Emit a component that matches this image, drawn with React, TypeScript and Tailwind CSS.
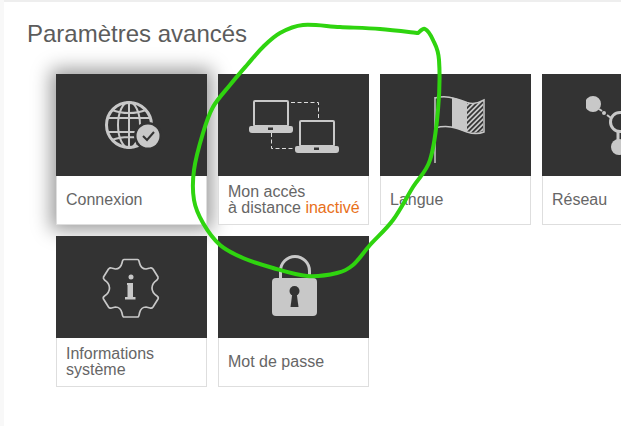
// scribble around the "Mon accès" card, traced from the screenshot
const scribble: [number, number][] = [
  [418, 33], [380, 29], [340, 27], [303, 25], [280, 33], [263, 47], [247, 65], [230, 85], [213, 107], [203, 133],
  [194, 170], [194, 200], [203, 223], [220, 245], [243, 258], [273, 268], [307, 276], [337, 273], [353, 265],
  [370, 245], [393, 220], [413, 187], [430, 160], [438, 110], [439, 60], [433, 40], [425, 29], [418, 33],
];

function smoothPath(pts: [number, number][]) {
  let d = `M${pts[0][0]} ${pts[0][1]}`;
  for (let i = 0; i < pts.length - 1; i++) {
    const p0 = pts[Math.max(i - 1, 0)];
    const p1 = pts[i];
    const p2 = pts[i + 1];
    const p3 = pts[Math.min(i + 2, pts.length - 1)];
    d += `C${p1[0] + (p2[0] - p0[0]) / 6} ${p1[1] + (p2[1] - p0[1]) / 6} ${p2[0] - (p3[0] - p1[0]) / 6} ${p2[1] - (p3[1] - p1[1]) / 6} ${p2[0]} ${p2[1]}`;
  }
  return d;
}

function GlobeIcon() {
  return (
    <svg width="62" height="62" viewBox="0 0 62 62" fill="none" stroke="#c8c8c8" strokeWidth="2">
      <circle cx="29" cy="31" r="22.5" strokeWidth="3" />
      <ellipse cx="29" cy="31" rx="11" ry="23" />
      <path d="M29 8v46M7 24h44M7 38h44M12 16c10 4 24 4 34 0M12 46c10-4 24-4 34 0" />
      <circle cx="48" cy="42" r="14" fill="#333333" stroke="none" />
      <circle cx="48" cy="42" r="11.5" fill="#c8c8c8" stroke="none" />
      <path d="M43 42l4 4 7-8" stroke="#333333" strokeWidth="2" />
    </svg>
  );
}

function Laptop({ x, y }: { x: number; y: number }) {
  return (
    <g transform={`translate(${x} ${y})`}>
      <rect x="5" y="1" width="34" height="25" rx="1" fill="none" stroke="#c8c8c8" strokeWidth="2" />
      <path d="M2 26h40a2 2 0 0 1 2 2v2a3 3 0 0 1-3 3H3a3 3 0 0 1-3-3v-2a2 2 0 0 1 2-2z" fill="#c8c8c8" />
      <rect x="19" y="27.5" width="5" height="2.5" fill="#333333" />
    </g>
  );
}

function LaptopsIcon() {
  return (
    <svg width="92" height="56" viewBox="0 0 92 56">
      <path d="M44 5.500H71.500V21M24.500 36V51.500H47" fill="none" stroke="#dddddd" strokeWidth="1" strokeDasharray="4 2.500" />
      <Laptop x={2} y={3} />
      <Laptop x={48} y={23} />
    </svg>
  );
}

function FlagIcon() {
  return (
    <svg width="60" height="76" viewBox="0 0 60 76" fill="none">
      <defs>
        <pattern id="hatch" width="3.500" height="3.500" patternUnits="userSpaceOnUse" patternTransform="rotate(45)">
          <rect width="3.500" height="3.500" fill="#333333" />
          <rect width="1.700" height="3.500" fill="#c8c8c8" />
        </pattern>
      </defs>
      <path d="M10 10v66" stroke="#c8c8c8" strokeWidth="1.500" />
      <path d="M27 10.500C32 11 37 14 42 15.500V45C37 44 32 41 27 40z" fill="#c8c8c8" />
      <path d="M42 15.500C48 17 53 16 58 13.500V44C53 46 48 46 42 45z" fill="url(#hatch)" />
      <path d="M10 11C20 8.500 27 10 42 15.500C48 17.500 54 16 59 13V45C54 47 48 47 42 45C30 40 22 38 10 41" stroke="#c8c8c8" strokeWidth="1.500" />
    </svg>
  );
}

function NetworkIcon() {
  return (
    <svg width="62" height="62" viewBox="0 0 62 62" fill="none">
      <circle cx="7" cy="10" r="8" fill="#c8c8c8" />
      <path d="M13 15l3 2" stroke="#c8c8c8" strokeWidth="2" />
      <circle cx="18" cy="19" r="2" fill="#c8c8c8" />
      <path d="M21 21l4 3" stroke="#c8c8c8" strokeWidth="2" />
      <circle cx="34" cy="28" r="9.500" stroke="#c8c8c8" strokeWidth="3" />
      <path d="M32 38v8" stroke="#c8c8c8" strokeWidth="3" />
      <circle cx="33" cy="53" r="8" fill="#c8c8c8" />
    </svg>
  );
}

function InfoGearIcon() {
  return (
    <svg width="60" height="62" viewBox="0 0 60 62" fill="none">
      <path
        d="M23 3.500H36.500C38 3.500 38 5 38.500 7C39.500 11 42 13 45 13L49 12C50.500 11.500 51 12 52 13L57 21C57.500 22.500 57 23 56 24C53 26 51 29 51 32C51 35 53 38 56 40C57.500 41 57.500 42 57 43L52 51C51 52.500 50.500 52.500 49 52L45 51C42 51 39.500 53 38.500 57C38 59.500 38 61 36.500 61H23C21.500 61 21.500 59.500 21 57C20 53 17.500 51 14.500 51L10.500 52C9 52.500 8.500 52.500 7.500 51L2.500 43C2 42 2 41 3.500 40C6.500 38 8.500 35 8.500 32C8.500 29 6.500 26 3.500 24C2.500 23 2 22.500 2.500 21L7.500 13C8.500 12 9 11.500 10.500 12L14.500 13C17.500 13 20 11 21 7C21.500 5 21.500 3.500 23 3.500Z"
        stroke="#c8c8c8"
        strokeWidth="1.700"
        strokeLinejoin="round"
      />
      <circle cx="30" cy="21" r="2.500" fill="#c8c8c8" />
      <path d="M26 27h6v14h2.500v2.500H24v-2.500h2.500V29H26z" fill="#c8c8c8" />
    </svg>
  );
}

function LockIcon() {
  return (
    <svg width="50" height="64" viewBox="0 0 50 64" fill="none">
      <path d="M12.500 24V16a14.500 14.500 0 0 1 29 0v8" stroke="#c8c8c8" strokeWidth="3" />
      <rect x="4" y="23" width="45" height="38" rx="4" fill="#c8c8c8" />
      <circle cx="26.500" cy="36" r="5" fill="#333333" />
      <path d="M24.500 37h4l2 15h-8z" fill="#333333" />
    </svg>
  );
}

function Card({ icon, children, shadow }: { icon: React.ReactNode; children: React.ReactNode; shadow?: boolean }) {
  return (
    <div className={shadow ? "flex flex-col w-[151px] h-[151px] bg-white shadow-[0_0_18px_5px_rgba(0,0,0,0.4)]" : "flex flex-col w-[151px] h-[151px] bg-white"}>
      <div className="flex items-center justify-center h-[102px] pr-[2px] bg-[#333333] shrink-0 overflow-hidden">{icon}</div>
      <div className="flex flex-1 items-center pl-[9px] border-x border-b border-[#dedede] text-[16px] leading-[16px] text-[#666666]">
        <div>{children}</div>
      </div>
    </div>
  );
}

export default function App() {
  return (
    <div className="relative w-[621px] h-[426px] overflow-hidden bg-white border-l-[4px] border-[#f8f8f8] font-['Liberation_Sans',Arial,sans-serif]">
      <div className="h-[2px] bg-[#eeeeee]" />
      <h1 className="pl-[23px] pt-[19px] text-[24px] leading-[26px] font-normal text-[#5c5c5c]">Paramètres avancés</h1>
      <div className="grid grid-cols-[repeat(4,151px)] gap-[11px] pl-[52px] pt-[27px]">
        <Card icon={<GlobeIcon />} shadow>Connexion</Card>
        <Card icon={<LaptopsIcon />}>
          Mon accès
          <br />à distance <span className="text-[#e8701a]">inactivé</span>
        </Card>
        <Card icon={<FlagIcon />}>Langue</Card>
        <Card icon={<NetworkIcon />}>Réseau</Card>
        <Card icon={<InfoGearIcon />}>
          Informations
          <br />système
        </Card>
        <Card icon={<LockIcon />}>Mot de passe</Card>
      </div>
      <svg className="absolute left-[-4px] top-0 pointer-events-none" width="621" height="426" viewBox="0 0 621 426" fill="none">
        <path d={smoothPath(scribble)} stroke="#2fd40f" strokeWidth="4" strokeLinecap="round" strokeLinejoin="round" />
      </svg>
    </div>
  );
}
